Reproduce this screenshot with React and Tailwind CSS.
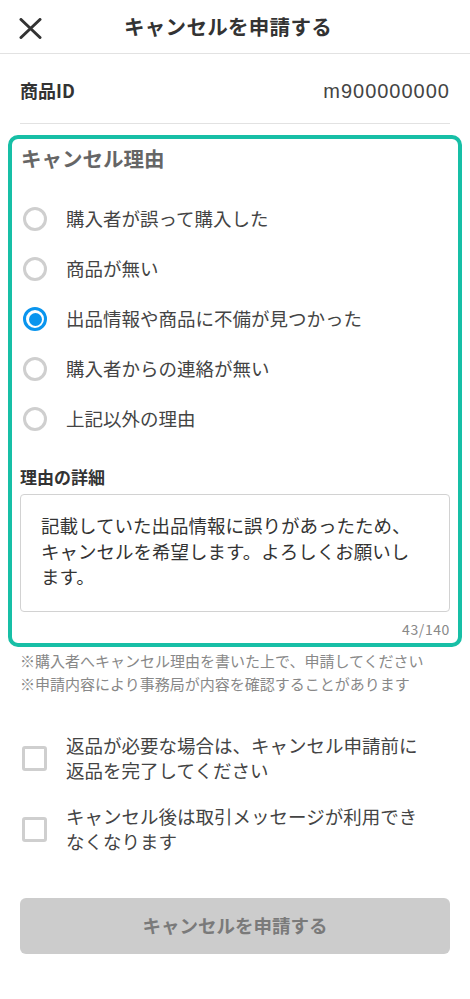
import { useState } from "react";

const reasons = [
  "購入者が誤って購入した",
  "商品が無い",
  "出品情報や商品に不備が見つかった",
  "購入者からの連絡が無い",
  "上記以外の理由",
];

const checks = [
  "返品が必要な場合は、キャンセル申請前に返品を完了してください",
  "キャンセル後は取引メッセージが利用できなくなります",
];

function Radio({ checked }) {
  return (
    <span
      className={`w-[24px] h-[24px] rounded-full border-[3px] flex items-center justify-center shrink-0 ${
        checked ? "border-[#0a95ee]" : "border-[#cfcfcf]"
      }`}
    >
      {checked && <span className="w-[13px] h-[13px] rounded-full bg-[#0a95ee]" />}
    </span>
  );
}

export default function App() {
  const [selected, setSelected] = useState(2);
  const [agreed, setAgreed] = useState([false, false]);
  const detail = "記載していた出品情報に誤りがあったため、キャンセルを希望します。よろしくお願いします。";

  return (
    <div className="w-[470px] min-h-[999px] bg-white text-[#333] font-['Noto_Sans_CJK_JP','Noto_Sans',sans-serif]">
      {/* Header */}
      <div className="h-[54px] border-b border-[#e2e2e2] flex items-center pl-[19px]">
        <svg width="23" height="21" viewBox="0 0 23 21" className="mt-[3px] shrink-0">
          <path d="M2 1.5 L21 19.5 M21 1.5 L2 19.5" stroke="#333" strokeWidth="3" strokeLinecap="round" />
        </svg>
        <h1 className="flex-1 text-center mr-[56px] text-[20.5px] font-bold tracking-[0.3px]">キャンセルを申請する</h1>
      </div>

      {/* Item ID */}
      <div className="h-[69px] flex items-center justify-between px-5 pt-[4px]">
        <span className="text-[18px] font-bold">商品ID</span>
        <span className="font-['Liberation_Sans',sans-serif] text-[20px] tracking-[1px] text-[#444]">m900000000</span>
      </div>
      <div className="mx-5 border-b border-[#e2e2e2]" />

      {/* Reason box */}
      <div className="mt-[11px] mx-2 border-4 border-[#17bfa6] rounded-[10px] px-2 pt-[6px] pb-[4px]">
        <h2 className="pl-[1px] text-[20.5px] leading-[26px] font-semibold text-[#666]">キャンセル理由</h2>

        <div className="mt-[23px]">
          {reasons.map((r, i) => (
            <button
              key={r}
              type="button"
              onClick={() => setSelected(i)}
              className="w-full h-[50px] flex items-center gap-[19px] pl-[3px] text-left"
            >
              <Radio checked={selected === i} />
              <span className="text-[18.5px] text-[#444]">{r}</span>
            </button>
          ))}
        </div>

        <div className="mt-[22px] text-[17px] leading-[22px] font-bold">理由の詳細</div>
        <div className="mt-[6px] h-[118px] border border-[#d2d2d2] rounded-[4px] pl-[20px] pr-[30px] pt-[18px] text-[18.5px] leading-[25.5px] text-[#333]">
          {detail}
        </div>
        <div className="mt-[7px] text-right text-[14px] leading-[20px] tracking-[0.6px] text-[#888]">{detail.length}/140</div>
      </div>

      {/* Notes */}
      <div className="mt-[3px] px-5 text-[15px] leading-[22.5px] text-[#888]">
        <p>※購入者へキャンセル理由を書いた上で、申請してください</p>
        <p>※申請内容により事務局が内容を確認することがあります</p>
      </div>

      {/* Checkboxes */}
      <div className="mt-[38px] px-5 flex flex-col gap-[21px]">
        {checks.map((c, i) => (
          <button
            key={c}
            type="button"
            onClick={() => setAgreed((prev) => prev.map((v, j) => (j === i ? !v : v)))}
            className="flex items-center gap-[19px] pl-[2px] text-left"
          >
            <span
              className={`w-[25px] h-[25px] rounded-[3px] border-[3px] shrink-0 ${
                agreed[i] ? "border-[#0a95ee] bg-[#0a95ee]" : "border-[#cfcfcf]"
              }`}
            />
            <span className="flex-1 pr-[24px] text-[18.5px] leading-[25px] text-[#444]">{c}</span>
          </button>
        ))}
      </div>

      {/* Submit */}
      <div className="px-5 mt-[44px] pb-10">
        <button
          type="button"
          disabled
          className="w-full h-[56px] rounded-[6px] bg-[#cccccc] text-[#7a7a7a] text-[18.5px] font-bold"
        >
          キャンセルを申請する
        </button>
      </div>
    </div>
  );
}
